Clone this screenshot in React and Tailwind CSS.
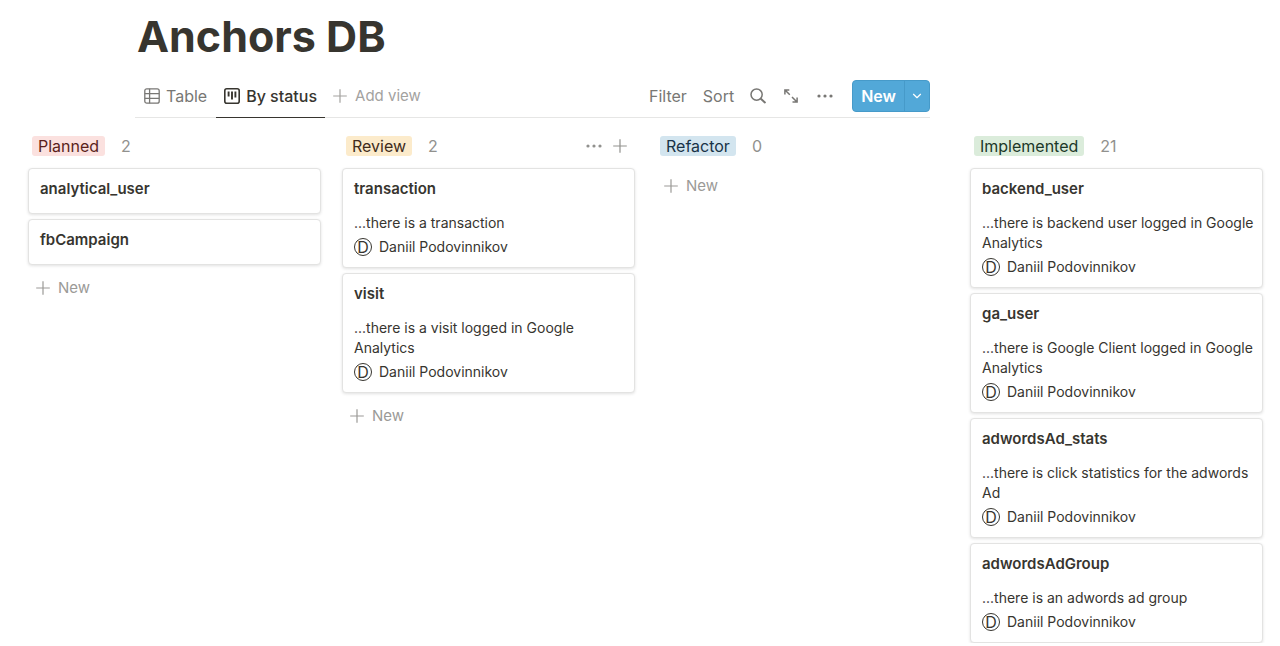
import { ChevronDown } from 'lucide-react';

const columns = [
  {
    name: 'Planned',
    count: 2,
    tag: 'bg-[#fbe1df] text-[#5a1f1b]',
    cards: [{ title: 'analytical_user' }, { title: 'fbCampaign' }],
  },
  {
    name: 'Review',
    count: 2,
    tag: 'bg-[#fcebcb] text-[#402c1b]',
    active: true,
    cards: [
      { title: 'transaction', text: '...there is a transaction' },
      { title: 'visit', text: '...there is a visit logged in Google Analytics' },
    ],
  },
  {
    name: 'Refactor',
    count: 0,
    tag: 'bg-[#d3e5ef] text-[#183347]',
    cards: [],
  },
  {
    name: 'Implemented',
    count: 21,
    tag: 'bg-[#dbecdb] text-[#1c3829]',
    full: true,
    cards: [
      { title: 'backend_user', text: '...there is backend user logged in Google Analytics' },
      { title: 'ga_user', text: '...there is Google Client logged in Google Analytics' },
      { title: 'adwordsAd_stats', text: '...there is click statistics for the adwords Ad' },
      { title: 'adwordsAdGroup', text: '...there is an adwords ad group' },
    ],
  },
];

function PlusIcon() {
  return (
    <svg viewBox="0 0 14 14" className="w-3.5 h-3.5 shrink-0" fill="none" stroke="currentColor" strokeWidth="1.2" aria-hidden="true">
      <path d="M7 0.2v13.6M0.2 7h13.6" />
    </svg>
  );
}

function DotsIcon() {
  return (
    <svg viewBox="0 0 18 4" className="w-[18px] h-1 shrink-0" fill="currentColor" aria-hidden="true">
      <circle cx="3" cy="2" r="1.6" />
      <circle cx="9" cy="2" r="1.6" />
      <circle cx="15" cy="2" r="1.6" />
    </svg>
  );
}

function TableIcon() {
  return (
    <svg viewBox="0 0 16 16" className="w-4 h-4 shrink-0" fill="none" stroke="currentColor" strokeWidth="1.3" aria-hidden="true">
      <rect x="0.8" y="0.8" width="14.4" height="14.4" rx="2" />
      <path d="M0.8 5.6h14.4M0.8 10.4h14.4M5.6 0.8v14.4" />
    </svg>
  );
}

function BoardIcon() {
  return (
    <svg viewBox="0 0 16 16" className="w-4 h-4 shrink-0" fill="none" stroke="currentColor" aria-hidden="true">
      <rect x="0.8" y="0.8" width="14.4" height="14.4" rx="2" strokeWidth="1.6" />
      <path d="M4.6 3.6v5M8 3.6v8M11.4 3.6v6" strokeWidth="1.9" />
    </svg>
  );
}

function SearchIcon() {
  return (
    <svg viewBox="0 0 16 16" className="w-4 h-4 shrink-0" fill="none" stroke="currentColor" strokeLinecap="round" aria-hidden="true">
      <circle cx="6.6" cy="6.6" r="5.6" strokeWidth="1.5" />
      <path d="M10.8 10.8l4.1 3.6" strokeWidth="2" />
    </svg>
  );
}

function ExpandIcon() {
  return (
    <svg viewBox="0 0 14 14" className="w-3.5 h-3.5 shrink-0" fill="none" stroke="currentColor" strokeWidth="1.5" aria-hidden="true">
      <path d="M0.9 5.4V1h4.4M1 1l4.8 4.8M13.1 8.4v4.6H8.5M13 13L8 8" />
    </svg>
  );
}

function Person() {
  return (
    <div className="flex items-center gap-[7px] h-6 mt-0.5">
      <span className="flex items-center justify-center w-[18px] h-[18px] rounded-full border border-[#37352f] text-base leading-4" aria-hidden="true">
        D
      </span>
      <span className="text-sm leading-5">Daniil Podovinnikov</span>
    </div>
  );
}

function Card({ title, text }) {
  return (
    <article className="border border-[#e3e3e2] rounded pt-2 pl-[11px] pr-1.5 bg-white shadow-[0_1px_3px_rgba(15,15,15,0.12)]">
      <h2 className="text-[15px] leading-6 font-semibold pb-3">{title}</h2>
      {text && (
        <div className="pb-2">
          <p className="text-sm leading-5">{text}</p>
          <Person />
        </div>
      )}
    </article>
  );
}

function Column({ column }) {
  return (
    <section className="min-w-0">
      <div className="flex items-center justify-between h-5 mb-3 pl-1 pr-2 text-base text-[#91918e]">
        <div className="flex items-center gap-4">
          <span className={`rounded-[3px] px-1.5 leading-5 ${column.tag}`}>{column.name}</span>
          <span>{column.count}</span>
        </div>
        {column.active && (
          <div className="flex items-center gap-2.5">
            <button aria-label="Column options"><DotsIcon /></button>
            <button aria-label="Add card"><PlusIcon /></button>
          </div>
        )}
      </div>
      <div className="flex flex-col gap-[5px]">
        {column.cards.map((card) => (
          <Card key={card.title} title={card.title} text={card.text} />
        ))}
        {!column.full && (
          <button className="flex items-center gap-2 h-9 px-2 text-[15px] text-[#9b9a97]">
            <PlusIcon />
            New
          </button>
        )}
      </div>
    </section>
  );
}

export default function App() {
  return (
    <main className="bg-white text-[#37352f] font-['Inter',sans-serif]">
      <header className="ml-[135px] mr-[350px]">
        <h1 className="text-[43px] leading-[73px] font-bold pl-0.5">Anchors DB</h1>
        <div className="flex items-center justify-between h-[45px] pt-0.5 border-b border-[#e6e6e5]">
          <nav className="flex self-stretch text-base whitespace-nowrap">
            <button className="flex items-center gap-1.5 px-[9px] text-[#787774]">
              <TableIcon />
              Table
            </button>
            <button className="flex items-center gap-1.5 px-2 -mb-px border-b border-[#37352f] font-medium">
              <BoardIcon />
              By status
            </button>
            <button className="flex items-center gap-2 px-2 text-[15px] text-[#a3a29f]">
              <PlusIcon />
              Add view
            </button>
          </nav>
          <div className="flex items-center gap-4 text-base text-[#787774]">
            <button>Filter</button>
            <button>Sort</button>
            <button aria-label="Search"><SearchIcon /></button>
            <button aria-label="Expand" className="px-0.5"><ExpandIcon /></button>
            <button aria-label="More"><DotsIcon /></button>
            <div className="flex h-8 ml-0.5 rounded bg-[#52a8d8] border border-[#469ac9] text-white">
              <button className="px-2 font-semibold border-r border-[#469ac9]">New</button>
              <button aria-label="More ways to add" className="px-[5px]">
                <ChevronDown className="w-3.5 h-3.5" />
              </button>
            </div>
          </div>
        </div>
      </header>
      <div className="grid grid-cols-4 gap-[21px] pl-7 pr-[17px] pt-[18px]">
        {columns.map((column) => (
          <Column key={column.name} column={column} />
        ))}
      </div>
    </main>
  );
}
